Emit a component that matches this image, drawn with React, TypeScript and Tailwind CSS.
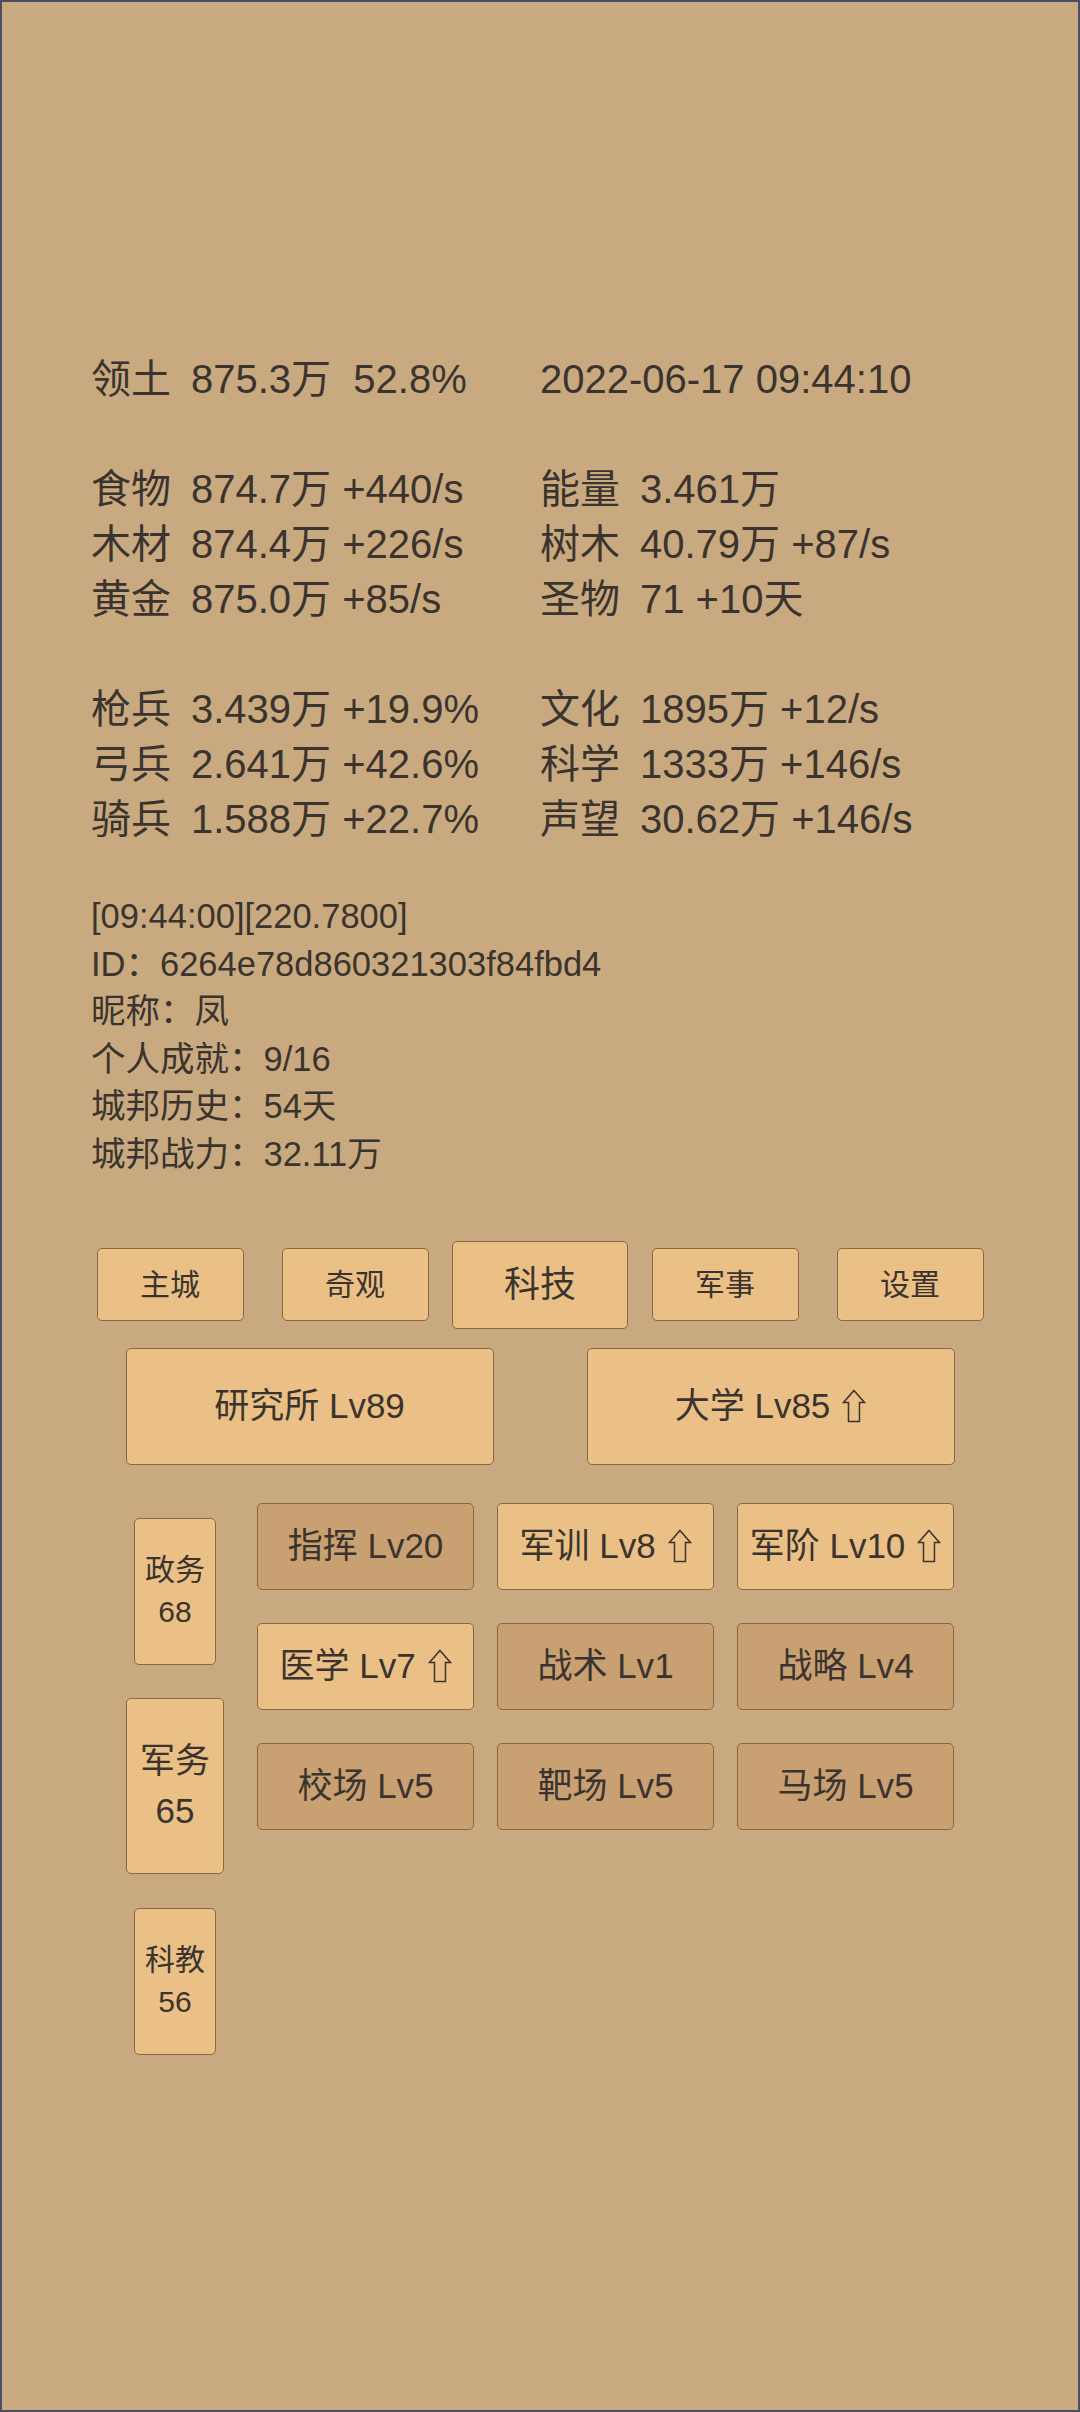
import React from 'react';

const FONT = 'font-["Liberation_Sans","Noto_Sans_CJK_SC","DejaVu_Sans",sans-serif]';

type Stat = { label: string; value: string };

const statRows: (null | [Stat | string, Stat | null])[] = [
    [{ label: '领土', value: '875.3万  52.8%' }, '2022-06-17 09:44:10'],
    null,
    [{ label: '食物', value: '874.7万 +440/s' }, { label: '能量', value: '3.461万' }],
    [{ label: '木材', value: '874.4万 +226/s' }, { label: '树木', value: '40.79万 +87/s' }],
    [{ label: '黄金', value: '875.0万 +85/s' }, { label: '圣物', value: '71 +10天' }],
    null,
    [{ label: '枪兵', value: '3.439万 +19.9%' }, { label: '文化', value: '1895万 +12/s' }],
    [{ label: '弓兵', value: '2.641万 +42.6%' }, { label: '科学', value: '1333万 +146/s' }],
    [{ label: '骑兵', value: '1.588万 +22.7%' }, { label: '声望', value: '30.62万 +146/s' }],
];

const info = [
    '[09:44:00][220.7800]',
    'ID：6264e78d860321303f84fbd4',
    '昵称：凤',
    '个人成就：9/16',
    '城邦历史：54天',
    '城邦战力：32.11万',
];

const tabs = ['主城', '奇观', '科技', '军事', '设置'];
const activeTab = '科技';

const sideItems = [
    { name: '政务', level: 68 },
    { name: '军务', level: 65 },
    { name: '科教', level: 56 },
];
const activeSide = '军务';

const techs = [
    { name: '指挥', lv: 20, up: false },
    { name: '军训', lv: 8, up: true },
    { name: '军阶', lv: 10, up: true },
    { name: '医学', lv: 7, up: true },
    { name: '战术', lv: 1, up: false },
    { name: '战略', lv: 4, up: false },
    { name: '校场', lv: 5, up: false },
    { name: '靶场', lv: 5, up: false },
    { name: '马场', lv: 5, up: false },
];

const UpArrow = () => (
    <svg viewBox="0 0 24 34" className="h-[0.97em] w-auto shrink-0" fill="none" stroke="#3b342e" strokeWidth="1.5" strokeLinejoin="miter">
        <path d="M12 1.5 L22.5 13.5 L17.5 13.5 L17.5 32.5 L6.5 32.5 L6.5 13.5 L1.5 13.5 Z" />
    </svg>
);

const StatCell = ({ stat }: { stat: Stat | string | null }) => {
    if (!stat) return <div />;
    if (typeof stat === 'string') return <div className="whitespace-pre">{stat}</div>;
    return (
        <div className="flex whitespace-pre">
            <span className="w-[100px] shrink-0">{stat.label}</span>
            <span>{stat.value}</span>
        </div>
    );
};

const btn = 'flex items-center justify-center rounded-[5px] border-[1.5px] border-[#8a6840]';
const light = 'bg-[#ebc086]';
const dark = 'bg-[#c9a071]';

export default function App() {
    return (
        <div className={`${FONT} w-[1080px] h-[2412px] bg-[#c9aa80] border-2 border-[#4b4f66] text-[#3b342e] overflow-hidden`}>
            {/* resources */}
            <div className="pl-[89px] pt-[350px] text-[40px] leading-[55px]">
                {statRows.map((row, i) =>
                    row ? (
                        <div key={i} className="grid grid-cols-[449px_1fr]">
                            <StatCell stat={row[0]} />
                            <StatCell stat={row[1]} />
                        </div>
                    ) : (
                        <div key={i} className="h-[55px]" />
                    )
                )}
            </div>

            {/* player info */}
            <div className="pl-[89px] mt-[46px] text-[34.5px] leading-[47.6px]">
                {info.map(line => (
                    <div key={line}>{line}</div>
                ))}
            </div>

            {/* main tabs */}
            <div className="mt-[62px] flex justify-center h-[88px]">
                {tabs.map(t => (
                    <div key={t} className="w-[185px] flex items-center justify-center">
                        {t === activeTab ? (
                            <div className={`${btn} ${light} w-[176px] h-[88px] text-[36px]`}>{t}</div>
                        ) : (
                            <div className={`${btn} ${light} w-[147px] h-[73px] text-[30px]`}>{t}</div>
                        )}
                    </div>
                ))}
            </div>

            {/* buildings */}
            <div className="mt-[19px] flex justify-center gap-[93px] text-[35px]">
                <div className={`${btn} ${light} w-[368px] h-[117px]`}>研究所 Lv89</div>
                <div className={`${btn} ${light} w-[368px] h-[117px] gap-[12px]`}>
                    <span>大学 Lv85</span>
                    <UpArrow />
                </div>
            </div>

            {/* tech tree */}
            <div className="mt-[29px] pl-[124px] flex items-start">
                <div className="w-[98px] flex flex-col">
                    {sideItems.map(s => (
                        <div key={s.name} className="h-[195px] flex items-center justify-center">
                            {s.name === activeSide ? (
                                <div className={`${btn} ${light} w-[98px] h-[176px] flex-col text-[35px] leading-[50px]`}>
                                    <span>{s.name}</span>
                                    <span>{s.level}</span>
                                </div>
                            ) : (
                                <div className={`${btn} ${light} w-[82px] h-[147px] flex-col text-[30px] leading-[42px]`}>
                                    <span>{s.name}</span>
                                    <span>{s.level}</span>
                                </div>
                            )}
                        </div>
                    ))}
                </div>

                <div className="ml-[33px] mt-[9px] grid grid-cols-[217px_217px_217px] gap-x-[23px] gap-y-[33px] text-[35px]">
                    {techs.map(t => (
                        <div key={t.name} className={`${btn} ${t.up ? light : dark} h-[87px] gap-[12px] whitespace-nowrap`}>
                            <span>{t.name} Lv{t.lv}</span>
                            {t.up && <UpArrow />}
                        </div>
                    ))}
                </div>
            </div>
        </div>
    );
}
